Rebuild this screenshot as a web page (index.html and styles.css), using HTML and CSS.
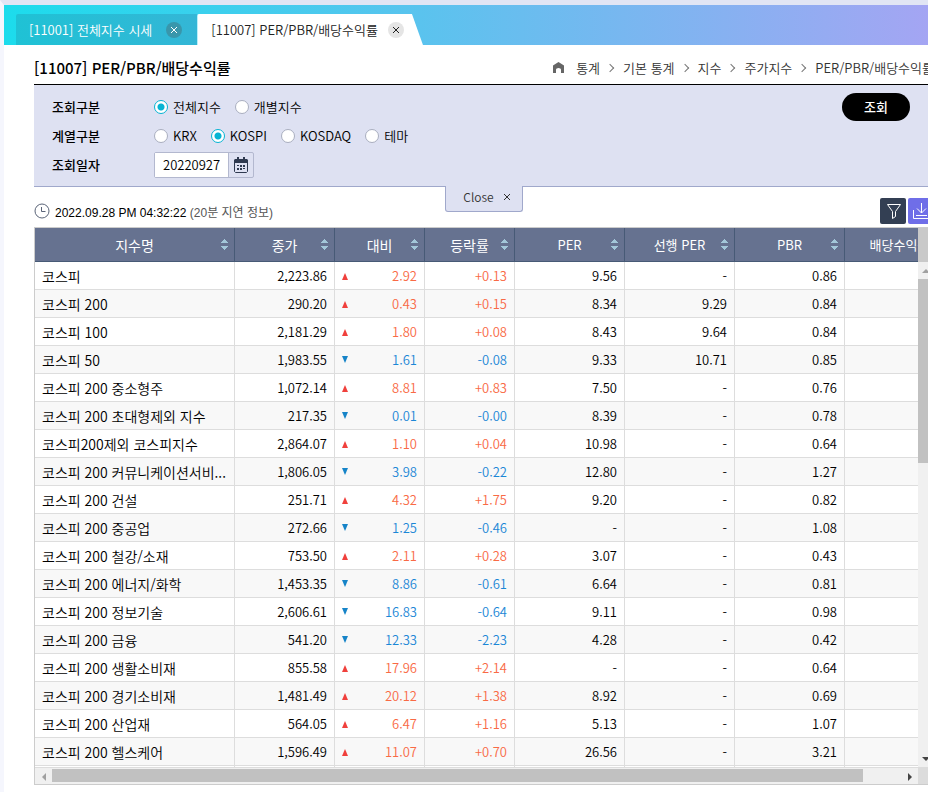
FILE: index.html
```html
<!DOCTYPE html>
<html lang="ko">
<head>
    <meta charset="UTF-8">
    <title>PER/PBR/배당수익률</title>
    <link rel="stylesheet" href="styles.css">
</head>

<body>
    <div class="wrap">
        <!-- 상단 탭 -->
        <nav class="tabs">
            <div class="tab">
                <a href="#">[11001] 전체지수 시세</a>
                <button type="button" class="tab-close" aria-label="탭 닫기">
                    <svg viewBox="0 0 16 16"><path d="M5 5l6 6M11 5l-6 6" /></svg>
                </button>
            </div>
            <div class="tab on">
                <a href="#">[11007] PER/PBR/배당수익률</a>
                <button type="button" class="tab-close" aria-label="탭 닫기">
                    <svg viewBox="0 0 16 16"><path d="M5 5l6 6M11 5l-6 6" /></svg>
                </button>
            </div>
        </nav>

        <main class="content">
            <!-- 제목 + 현재위치 -->
            <header class="title">
                <h1>[11007] PER/PBR/배당수익률</h1>
                <ol class="location">
                    <li>
                        <a href="#" aria-label="홈">
                            <svg class="home" viewBox="0 0 11 11"><path d="M5.500 0L11 3.500V11H8V7.500Q8 6 5.500 6T3 7.500V11H0V3.500z" /></svg>
                        </a>
                    </li>
                    <li><a href="#">통계</a></li>
                    <li><a href="#">기본 통계</a></li>
                    <li><a href="#">지수</a></li>
                    <li><a href="#">주가지수</a></li>
                    <li><a href="#">PER/PBR/배당수익률</a></li>
                </ol>
            </header>

            <!-- 검색조건 -->
            <form class="search">
                <div class="row" role="group" aria-labelledby="t1">
                    <span class="name" id="t1">조회구분</span>
                    <label><input type="radio" name="search" checked>전체지수</label>
                    <label><input type="radio" name="search">개별지수</label>
                </div>
                <div class="row" role="group" aria-labelledby="t2">
                    <span class="name" id="t2">계열구분</span>
                    <label><input type="radio" name="family">KRX</label>
                    <label><input type="radio" name="family" checked>KOSPI</label>
                    <label><input type="radio" name="family">KOSDAQ</label>
                    <label><input type="radio" name="family">테마</label>
                </div>
                <div class="row">
                    <label class="name" for="day">조회일자</label>
                    <div class="date">
                        <input type="text" id="day" value="20220927">
                        <button type="button" aria-label="달력">
                            <svg viewBox="0 0 14 16">
                                <path class="fill" d="M1 2h12l1 1v3H0V3z M3 0h2v3H3z M9 0h2v3H9z" />
                                <path class="line" d="M.5 5v9.500l1 1h11l1-1V5" />
                                <path class="fill" d="M6 8h2v2H6z M9 8h2v2H9z M3 11h2v2H3z M6 11h2v2H6z M3 8h2v1H3z M9 11h2v1H9z" />
                            </svg>
                        </button>
                    </div>
                </div>
                <button type="submit" class="submit">조회</button>
                <button type="button" class="fold">Close
                    <svg viewBox="0 0 8 8"><path d="M1 1l6 6M7 1l-6 6" /></svg>
                </button>
            </form>

            <!-- 기준시간 + 도구 -->
            <div class="info">
                <svg class="clock" viewBox="0 0 16 16"><circle cx="8" cy="8" r="7" /><path d="M7.500 4v4.500H11.500" /></svg>
                <p>2022.09.28 PM 04:32:22 <span>(20분 지연 정보)</span></p>
                <button type="button" class="tool filter" aria-label="필터">
                    <svg viewBox="0 0 26 26"><path d="M7.500 6.500h13l-5 7v5l-3 2v-7z" /></svg>
                </button>
                <button type="button" class="tool down" aria-label="다운로드">
                    <svg viewBox="0 0 26 26"><path d="M13.500 5v10M9 10.500l4.500 4.500 4.500-4.500M5.500 12v8.500h16V12M8 17.500h11" /></svg>
                </button>
            </div>

            <!-- 데이터 그리드 -->
            <div class="grid">
                <div class="view">
                    <table>
                        <colgroup>
                            <col class="w200"><col class="w100"><col class="w90"><col class="w90">
                            <col class="w110"><col class="w110"><col class="w110"><col class="w110">
                        </colgroup>
                        <thead>
                            <tr>
                                <th><button type="button">지수명</button></th>
                                <th><button type="button">종가</button></th>
                                <th><button type="button">대비</button></th>
                                <th><button type="button">등락률</button></th>
                                <th><button type="button">PER</button></th>
                                <th><button type="button">선행 PER</button></th>
                                <th><button type="button">PBR</button></th>
                                <th><button type="button">배당수익률</button></th>
                            </tr>
                        </thead>
                        <tbody>
                            <tr class="up"><td>코스피</td><td>2,223.86</td><td>2.92</td><td>+0.13</td><td>9.56</td><td>-</td><td>0.86</td><td></td></tr>
                            <tr class="up"><td>코스피 200</td><td>290.20</td><td>0.43</td><td>+0.15</td><td>8.34</td><td>9.29</td><td>0.84</td><td></td></tr>
                            <tr class="up"><td>코스피 100</td><td>2,181.29</td><td>1.80</td><td>+0.08</td><td>8.43</td><td>9.64</td><td>0.84</td><td></td></tr>
                            <tr class="dn"><td>코스피 50</td><td>1,983.55</td><td>1.61</td><td>-0.08</td><td>9.33</td><td>10.71</td><td>0.85</td><td></td></tr>
                            <tr class="up"><td>코스피 200 중소형주</td><td>1,072.14</td><td>8.81</td><td>+0.83</td><td>7.50</td><td>-</td><td>0.76</td><td></td></tr>
                            <tr class="dn"><td>코스피 200 초대형제외 지수</td><td>217.35</td><td>0.01</td><td>-0.00</td><td>8.39</td><td>-</td><td>0.78</td><td></td></tr>
                            <tr class="up"><td>코스피200제외 코스피지수</td><td>2,864.07</td><td>1.10</td><td>+0.04</td><td>10.98</td><td>-</td><td>0.64</td><td></td></tr>
                            <tr class="dn"><td>코스피 200 커뮤니케이션서비...</td><td>1,806.05</td><td>3.98</td><td>-0.22</td><td>12.80</td><td>-</td><td>1.27</td><td></td></tr>
                            <tr class="up"><td>코스피 200 건설</td><td>251.71</td><td>4.32</td><td>+1.75</td><td>9.20</td><td>-</td><td>0.82</td><td></td></tr>
                            <tr class="dn"><td>코스피 200 중공업</td><td>272.66</td><td>1.25</td><td>-0.46</td><td>-</td><td>-</td><td>1.08</td><td></td></tr>
                            <tr class="up"><td>코스피 200 철강/소재</td><td>753.50</td><td>2.11</td><td>+0.28</td><td>3.07</td><td>-</td><td>0.43</td><td></td></tr>
                            <tr class="dn"><td>코스피 200 에너지/화학</td><td>1,453.35</td><td>8.86</td><td>-0.61</td><td>6.64</td><td>-</td><td>0.81</td><td></td></tr>
                            <tr class="dn"><td>코스피 200 정보기술</td><td>2,606.61</td><td>16.83</td><td>-0.64</td><td>9.11</td><td>-</td><td>0.98</td><td></td></tr>
                            <tr class="dn"><td>코스피 200 금융</td><td>541.20</td><td>12.33</td><td>-2.23</td><td>4.28</td><td>-</td><td>0.42</td><td></td></tr>
                            <tr class="up"><td>코스피 200 생활소비재</td><td>855.58</td><td>17.96</td><td>+2.14</td><td>-</td><td>-</td><td>0.64</td><td></td></tr>
                            <tr class="up"><td>코스피 200 경기소비재</td><td>1,481.49</td><td>20.12</td><td>+1.38</td><td>8.92</td><td>-</td><td>0.69</td><td></td></tr>
                            <tr class="up"><td>코스피 200 산업재</td><td>564.05</td><td>6.47</td><td>+1.16</td><td>5.13</td><td>-</td><td>1.07</td><td></td></tr>
                            <tr class="up"><td>코스피 200 헬스케어</td><td>1,596.49</td><td>11.07</td><td>+0.70</td><td>26.56</td><td>-</td><td>3.21</td><td></td></tr>
                            <tr><td></td><td></td><td></td><td></td><td></td><td></td><td></td><td></td></tr>
                        </tbody>
                    </table>
                </div>
                <div class="vbar">
                    <i class="arrow up-arrow off"></i>
                    <div class="track"><div class="thumb"></div></div>
                    <i class="arrow down-arrow"></i>
                </div>
                <div class="hbar">
                    <i class="arrow left-arrow off"></i>
                    <div class="track"><div class="thumb"></div></div>
                    <i class="arrow right-arrow"></i>
                </div>
                <div class="corner"></div>
            </div>
        </main>
    </div>
</body>
</html>
```
FILE: styles.css
```css
* {
    box-sizing: border-box;
}

html,
body {
    margin: 0;
    padding: 0;
    height: 100%;
}

body {
    overflow: hidden;
    border-top: 5px solid #e1e5f4;
    border-left: 4px solid #f5f6fd;
    background: #fff;
    color: #000;
    font: 350 13px/20px "Noto Sans CJK KR", "Noto Sans", sans-serif;
}

h1,
p,
ol {
    margin: 0;
    padding: 0;
    list-style: none;
}

a {
    color: inherit;
    text-decoration: none;
}

button,
input {
    margin: 0;
    padding: 0;
    border: 0;
    background: none;
    color: inherit;
    font: inherit;
}

svg {
    display: block;
    fill: none;
    stroke: currentColor;
}

.wrap {
    display: flex;
    flex-direction: column;
    height: 100%;
}

/* 상단 탭 */
.tabs {
    display: flex;
    align-items: flex-end;
    flex: none;
    height: 40px;
    padding-left: 12px;
    background: linear-gradient(to right, #1cdcec, #5ac3ee 45%, #a4a5f3);
}

.tab {
    display: flex;
    align-items: center;
    gap: 14px;
    height: 31px;
    padding: 0 15px 0 13px;
    border-radius: 2px 0 0 0;
    background: linear-gradient(to right, #1fc2d5, #34b6d6);
    color: #fff;
}

.tab.on {
    gap: 10px;
    padding: 0 19px 0 14px;
    background: #fff;
    color: #222;
    clip-path: polygon(0 0, calc(100% - 11px) 0, 100% 100%, 0 100%);
}

.tab-close {
    width: 16px;
    height: 16px;
    border-radius: 50%;
    background: #3996ab;
}

.tab.on .tab-close {
    background: #e5e5e5;
}

/* 내용 : 오른쪽은 창 밖으로 조금 넘침 */
.content {
    display: flex;
    flex-direction: column;
    flex: 1;
    min-height: 0;
    margin: 0 -6px 7px 30px;
}

.title {
    display: flex;
    align-items: center;
    justify-content: space-between;
    flex: none;
    height: 40px;
    padding-top: 6px;
    border-bottom: 1px solid #000;
}

h1 {
    font-size: 15px;
    font-weight: 500;
}

.location {
    display: flex;
    align-items: center;
    color: #333;
    white-space: nowrap;
}

.location li {
    display: flex;
    align-items: center;
}

.location li:first-child {
    margin-right: 12px;
}

.location li + li + li::before {
    content: "";
    width: 5px;
    height: 5px;
    margin: 0 10px 0 7px;
    border: solid #777;
    border-width: 1px 1px 0 0;
    transform: rotate(45deg);
}

.home {
    width: 11px;
    height: 11px;
    fill: #666;
    stroke: none;
}

/* 검색조건 */
.search {
    position: relative;
    flex: none;
    padding: 7px 18px;
    border-bottom: 1px solid #a0a8cb;
    background: #dee1f2;
}

.row {
    display: flex;
    align-items: center;
    gap: 14px;
    height: 29px;
}

.name {
    width: 88px;
    font-weight: 500;
}

.row label {
    display: flex;
    align-items: center;
    gap: 5px;
}

.row input[type="radio"] {
    appearance: none;
    width: 14px;
    height: 14px;
    border: 1px solid #a9aebf;
    border-radius: 50%;
    background: #fff;
}

.row input[type="radio"]:checked {
    border-color: #06b4d3;
    background: radial-gradient(circle, #06b4d3 3px, #fff 4px);
}

.date {
    display: flex;
    width: 100px;
    height: 26px;
    border: 1px solid #b3b8cf;
    border-radius: 2px;
}

.date input {
    width: 74px;
    padding: 0 8px;
    border-right: 1px solid #b3b8cf;
    background: #fff;
}

.date button {
    flex: 1;
}

.date svg {
    width: 14px;
    height: 16px;
    margin: 0 auto;
    color: #2f3a50;
}

.date .fill {
    fill: currentColor;
    stroke: none;
}

.submit {
    position: absolute;
    top: 8px;
    right: 24px;
    width: 68px;
    height: 28px;
    border-radius: 14px;
    background: #000;
    color: #fff;
    font-weight: 500;
}

.fold {
    display: flex;
    align-items: center;
    justify-content: center;
    gap: 9px;
    position: absolute;
    top: 100%;
    left: 50%;
    width: 78px;
    height: 26px;
    margin-left: -39px;
    padding: 0 0 4px 6px;
    border: 1px solid #a0a8cb;
    border-top: 0;
    border-radius: 0 0 3px 3px;
    background: #dee1f2;
    color: #333;
    font-size: 12px;
}

.fold svg {
    width: 8px;
    height: 8px;
}

/* 기준시간 */
.info {
    display: flex;
    align-items: center;
    flex: none;
    padding: 11px 0 3px;
}

.info p {
    flex: 1;
    padding: 4px 0 0 5px;
    font: 12px/20px "Liberation Sans", "Noto Sans CJK KR", sans-serif;
}

.info span {
    color: #555;
}

.clock {
    width: 16px;
    height: 16px;
    color: #5a6478;
}

.tool {
    width: 26px;
    height: 26px;
    margin-left: 2px;
    border-radius: 2px;
    color: #fff;
}

.filter {
    background: #333f53;
}

.down {
    background: #6f6ee8;
}

/* 그리드 */
.grid {
    display: grid;
    grid-template: minmax(0, 1fr) 17px / minmax(0, 1fr) 15px;
    flex: 1;
    min-height: 0;
    border: 1px solid #ccc;
}

.view {
    overflow: hidden;
}

table {
    width: 920px;
    table-layout: fixed;
    border-collapse: separate;
    border-spacing: 0;
}

.w200 {
    width: 200px;
}

.w100 {
    width: 100px;
}

.w90 {
    width: 90px;
}

.w110 {
    width: 110px;
}

th {
    height: 34px;
    padding: 0 6px;
    border-right: 1px solid #475a76;
    border-bottom: 1px solid #475a76;
    background: #667290;
    color: #fff;
    font-size: 14px;
    font-weight: 400;
}

th:nth-child(n+5) {
    font-size: 13px;
}

th button {
    display: flex;
    align-items: center;
    justify-content: center;
    width: 100%;
    white-space: nowrap;
}

th button::before {
    content: "";
    flex: 1;
}

/* 정렬 화살표 */
th button::after {
    content: "";
    flex: 1;
    height: 11px;
    background:
        conic-gradient(from 135deg at 50% 0, #a3c7d9 90deg, transparent 0) right 0 top 0 / 7px 4px no-repeat,
        conic-gradient(from -45deg at 50% 100%, #a3c7d9 90deg, transparent 0) right 0 bottom 0 / 7px 4px no-repeat;
}

td {
    height: 28px;
    padding: 1px 7px 0;
    border-right: 1px solid #ddd;
    border-bottom: 1px solid #ddd;
    line-height: 20px;
    text-align: right;
    white-space: nowrap;
}

tr:nth-child(even) td {
    background: #f8f8f8;
}

td:first-child {
    padding-top: 0;
    font-size: 14px;
    text-align: left;
}

.up td:nth-child(3),
.up td:nth-child(4) {
    color: #f96a45;
}

.dn td:nth-child(3),
.dn td:nth-child(4) {
    color: #1b87d6;
}

/* 등락 표시 */
td:nth-child(3)::before {
    content: "";
    float: left;
    width: 6px;
    height: 7px;
    margin-top: 7px;
}

.up td:nth-child(3)::before {
    background: #f0403c;
    clip-path: polygon(50% 0, 100% 100%, 0 100%);
}

.dn td:nth-child(3)::before {
    margin-top: 6px;
    background: #1684c8;
    clip-path: polygon(0 0, 100% 0, 50% 100%);
}

/* 스크롤바 */
.vbar,
.hbar {
    display: flex;
    background: #f0f0f0;
}

.vbar {
    flex-direction: column;
    align-items: stretch;
    border-top: 34px solid #c9c9c9;
}

.hbar {
    border-top: 1px solid #ddd;
}

.track {
    flex: 1;
}

.thumb {
    background: #c1c1c1;
}

.vbar .thumb {
    height: 39%;
}

.hbar .thumb {
    width: calc(100% - 38px);
    height: 13px;
    margin-top: 1px;
}

.corner {
    background: #dcdcdc;
}

.arrow {
    display: flex;
    align-items: center;
    justify-content: center;
    width: 17px;
    height: 17px;
    color: #444;
}

.vbar .arrow {
    width: 15px;
}

.arrow::before {
    content: "";
    border: 4px solid transparent;
}

.off {
    color: #a0a0a0;
}

.up-arrow::before {
    border-top: 0;
    border-bottom-color: currentColor;
}

.down-arrow::before {
    border-bottom: 0;
    border-top-color: currentColor;
}

.left-arrow::before {
    border-left: 0;
    border-right-color: currentColor;
}

.right-arrow::before {
    border-right: 0;
    border-left-color: currentColor;
}
```
